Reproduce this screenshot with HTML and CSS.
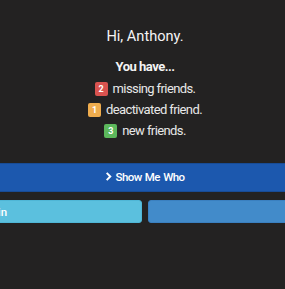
FILE: index.html
```html
<!DOCTYPE html>
<html lang="en">
<head>
  <meta charset="UTF-8">
  <meta name="viewport" content="width=device-width, initial-scale=1.0">
  <title>Friends</title>
  <link rel="stylesheet" href="styles.css">
</head>
<body>

  <div class="page">
    <h1 class="greeting">Hi, Anthony.</h1>
    <p class="intro">You have...</p>

    <ul class="stats">
      <li class="stat"><span class="badge badge-red">2</span> missing friends.</li>
      <li class="stat"><span class="badge badge-orange">1</span> deactivated friend.</li>
      <li class="stat"><span class="badge badge-green">3</span> new friends.</li>
    </ul>

    <button class="btn btn-primary btn-wide">
      <svg class="chevron" viewBox="0 0 7 10" width="6" height="9">
        <path d="M1.6 0 L6.6 5 L1.6 10 L0 8.4 L3.4 5 L0 1.6 Z" fill="currentColor"/>
      </svg>
      Show Me Who
    </button>

    <div class="actions">
      <button class="btn btn-info">Join</button>
      <button class="btn btn-secondary">Go</button>
    </div>
  </div>

</body>
</html>
```

FILE: styles.css
```css
* {
  margin: 0;
  padding: 0;

  box-sizing: border-box;
  font-family: 'Roboto', sans-serif;
}

body {
  background: #232222;
  overflow: hidden;
}

ul {
  list-style: none;
}

.page {
  display: flex;
  flex-direction: column;
  align-items: center;

  width: 590px;
  margin-left: -150px;
  padding-top: 27px;

  color: #e8e8e8;
  text-align: center;
}

.greeting {
  font-size: 14.6px;
  line-height: 18px;
  font-weight: 400;
  color: #f4f4f4;
}

.intro {
  margin-top: 13.5px;

  font-size: 13px;
  line-height: 16px;
  font-weight: 700;
  letter-spacing: -0.5px;
  color: #f4f4f4;
}

.stats {
  margin-top: 3.5px;
}

.stat {
  display: flex;
  align-items: center;
  justify-content: center;
  gap: 5px;

  height: 21px;
  font-size: 13px;
  letter-spacing: -0.6px;
}

.badge {
  display: inline-flex;
  align-items: center;
  justify-content: center;

  width: 13px;
  height: 14px;
  border-radius: 2px;

  color: #fff;
  font-size: 9px;
  font-weight: 700;
  letter-spacing: 0;
}

.badge-red {
  background: #d9534f;
}

.badge-orange {
  background: #f0ad4e;
}

.badge-green {
  background: #5cb85c;
}

.btn {
  display: flex;
  align-items: center;
  justify-content: center;
  gap: 4px;

  border: 1px solid transparent;
  border-radius: 3px;

  color: #fff;
  font-family: 'Roboto', sans-serif;
  font-size: 11.5px;
  font-weight: 500;
  letter-spacing: -0.6px;
  word-spacing: 1px;
}

.btn-primary {
  background: #1c58ae;
  border-color: #184c96;
}

.btn-wide {
  width: 100%;
  height: 29px;
  margin-top: 22px;
  padding-bottom: 2px;
}

.chevron {
  margin-top: -1px;
}

.actions {
  display: grid;
  grid-template-columns: 1fr 1fr;
  gap: 6px;

  width: 100%;
  margin-top: 8px;
}

.actions .btn {
  height: 23px;
  letter-spacing: 0;
}

.btn-info {
  background: #5bc0de;
  border-color: #4fb6d6;
}

.btn-secondary {
  background: #428bca;
  border-color: #3a80c0;
}
```
